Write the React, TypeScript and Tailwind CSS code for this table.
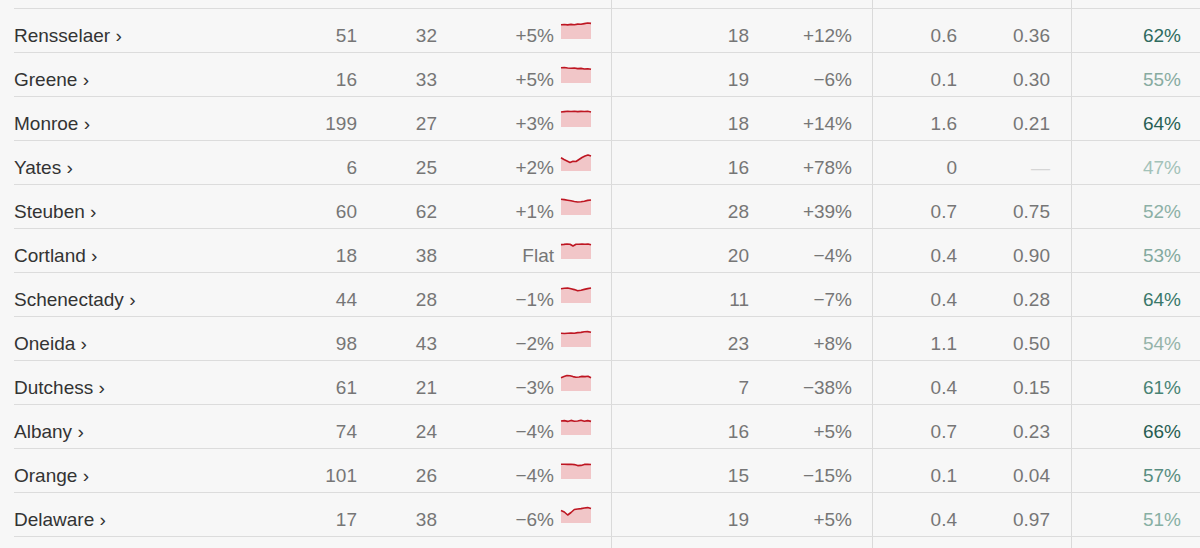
type Row = {
  county: string;
  cases: string;
  perCap: string;
  trend: string;
  spark: number[];
  deaths: string;
  deathChg: string;
  rate: string;
  ratio: string;
  vax: string;
  vaxColor: string;
};

const rows: Row[] = [
  { county: "Rensselaer", cases: "51", perCap: "32", trend: "+5%", spark: [2.7, 2.5, 2.9, 2.4, 2.7, 2.1, 2.3, 1.6, 1.0, 1.4], deaths: "18", deathChg: "+12%", rate: "0.6", ratio: "0.36", vax: "62%", vaxColor: "text-[#2f6b5f]" },
  { county: "Greene", cases: "16", perCap: "33", trend: "+5%", spark: [1.8, 1.5, 2.0, 2.2, 2.0, 2.6, 2.4, 3.0, 2.7, 3.3], deaths: "19", deathChg: "−6%", rate: "0.1", ratio: "0.30", vax: "55%", vaxColor: "text-[#88aba1]" },
  { county: "Monroe", cases: "199", perCap: "27", trend: "+3%", spark: [2.0, 1.6, 1.3, 1.5, 1.2, 1.6, 1.4, 1.5, 1.3, 2.0], deaths: "18", deathChg: "+14%", rate: "1.6", ratio: "0.21", vax: "64%", vaxColor: "text-[#285f54]" },
  { county: "Yates", cases: "6", perCap: "25", trend: "+2%", spark: [3.7, 5.5, 7.0, 8.5, 7.2, 7.5, 5.5, 3.5, 2.0, 1.0, 2.0], deaths: "16", deathChg: "+78%", rate: "0", ratio: "", vax: "47%", vaxColor: "text-[#a3c2b9]" },
  { county: "Steuben", cases: "60", perCap: "62", trend: "+1%", spark: [1.3, 1.6, 2.2, 2.8, 3.5, 4.0, 3.8, 3.2, 2.4, 2.0], deaths: "28", deathChg: "+39%", rate: "0.7", ratio: "0.75", vax: "52%", vaxColor: "text-[#8cb0a6]" },
  { county: "Cortland", cases: "18", perCap: "38", trend: "Flat", spark: [2.6, 2.4, 2.0, 2.2, 4.0, 2.3, 2.2, 2.1, 2.3, 2.0, 2.8], deaths: "20", deathChg: "−4%", rate: "0.4", ratio: "0.90", vax: "53%", vaxColor: "text-[#83a99e]" },
  { county: "Schenectady", cases: "44", perCap: "28", trend: "−1%", spark: [2.7, 2.2, 2.0, 2.8, 3.6, 4.8, 4.2, 3.4, 2.6, 2.0], deaths: "11", deathChg: "−7%", rate: "0.4", ratio: "0.28", vax: "64%", vaxColor: "text-[#3a786a]" },
  { county: "Oneida", cases: "98", perCap: "43", trend: "−2%", spark: [3.3, 3.5, 3.2, 3.0, 3.2, 2.6, 2.4, 1.8, 1.6, 2.2], deaths: "23", deathChg: "+8%", rate: "1.1", ratio: "0.50", vax: "54%", vaxColor: "text-[#95b3a9]" },
  { county: "Dutchess", cases: "61", perCap: "21", trend: "−3%", spark: [3.7, 2.6, 1.6, 1.8, 2.6, 3.2, 3.0, 2.4, 2.6, 2.2, 3.8], deaths: "7", deathChg: "−38%", rate: "0.4", ratio: "0.15", vax: "61%", vaxColor: "text-[#488374]" },
  { county: "Albany", cases: "74", perCap: "24", trend: "−4%", spark: [3.0, 2.6, 3.4, 2.4, 3.2, 3.0, 2.2, 3.2, 2.6, 3.4], deaths: "16", deathChg: "+5%", rate: "0.7", ratio: "0.23", vax: "66%", vaxColor: "text-[#285d52]" },
  { county: "Orange", cases: "101", perCap: "26", trend: "−4%", spark: [2.3, 2.2, 2.4, 2.3, 2.6, 3.6, 3.4, 2.4, 2.3, 2.5], deaths: "15", deathChg: "−15%", rate: "0.1", ratio: "0.04", vax: "57%", vaxColor: "text-[#588d80]" },
  { county: "Delaware", cases: "17", perCap: "38", trend: "−6%", spark: [4.5, 6.0, 9.0, 6.5, 3.5, 3.0, 2.6, 2.0, 1.6, 2.6], deaths: "19", deathChg: "+5%", rate: "0.4", ratio: "0.97", vax: "51%", vaxColor: "text-[#88b0a4]" },
];

function Spark({ data }: { data: number[] }) {
  const w = 30;
  const h = 17;
  const step = w / (data.length - 1);
  const pts = data.map((y, i) => `${(i * step).toFixed(2)},${y.toFixed(2)}`);
  const line = `M${pts.join(" L")}`;
  const area = `${line} L${w},${h} L0,${h} Z`;
  return (
    <svg width={w} height={h} viewBox={`0 0 ${w} ${h}`} className="block overflow-visible">
      <path d={area} fill="#f1c6c8" />
      <path d={line} fill="none" stroke="#be1622" strokeWidth={1.6} strokeLinejoin="round" />
    </svg>
  );
}

const grid =
  "grid grid-cols-[286px_57px_80px_117px_57px_138px_123px_85px_114px_111px]";
const num = "flex items-end justify-end pb-1 text-[#767676]";

export default function App() {
  return (
    <div
      className="w-[1200px] h-[548px] overflow-hidden bg-[#f7f7f7] pl-[14px] text-[19px] leading-6"
      style={{ fontFamily: '"Liberation Sans", Arial, sans-serif' }}
    >
      <div className={`${grid} h-2`}>
        <div className="col-span-5" />
        <div className="border-l border-[#dadada]" />
        <div />
        <div className="border-l border-[#dadada]" />
        <div />
        <div className="border-l border-[#dadada]" />
      </div>
      <div className="border-t border-[#dcdcdc]" />
      {rows.map(r => (
        <div key={r.county} className={`${grid} h-[44px] border-b border-[#dcdcdc]`}>
          <div className="flex items-end pb-1 text-[#333]">{r.county} ›</div>
          <div className={num}>{r.cases}</div>
          <div className={num}>{r.perCap}</div>
          <div className={num}>{r.trend}</div>
          <div className="pl-[7px] pt-[13px]">
            <Spark data={r.spark} />
          </div>
          <div className={`${num} border-l border-[#dadada]`}>{r.deaths}</div>
          <div className={`${num} pr-5`}>{r.deathChg}</div>
          <div className={`${num} border-l border-[#dadada]`}>{r.rate}</div>
          <div className={`${num} pr-[21px]`}>
            {r.ratio || <span className="text-[#d6d6d6]">—</span>}
          </div>
          <div className={`flex items-end justify-end pb-1 pr-px border-l border-[#dadada] ${r.vaxColor}`}>
            {r.vax}
          </div>
        </div>
      ))}
      <div className={`${grid} h-4`}>
        <div className="col-span-5" />
        <div className="border-l border-[#dadada]" />
        <div />
        <div className="border-l border-[#dadada]" />
        <div />
        <div className="border-l border-[#dadada]" />
      </div>
    </div>
  );
}
